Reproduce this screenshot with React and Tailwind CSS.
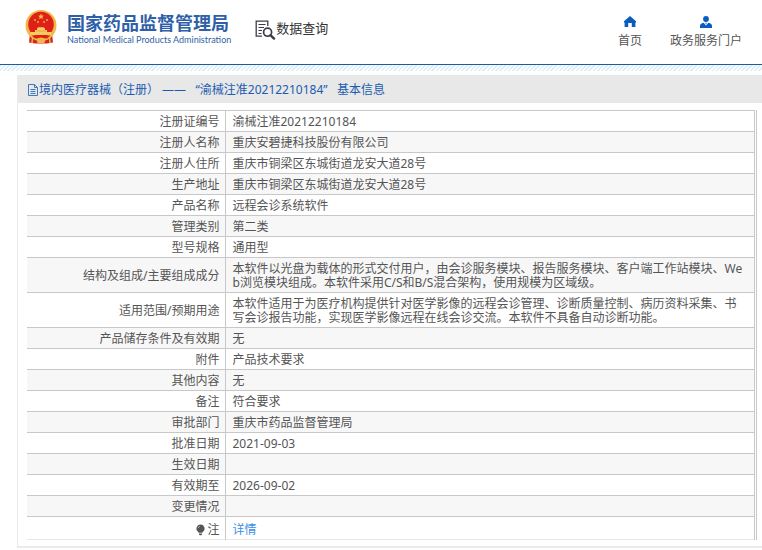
const rows = [
    { label: "注册证编号", value: "渝械注准20212210184" },
    { label: "注册人名称", value: "重庆安碧捷科技股份有限公司" },
    { label: "注册人住所", value: "重庆市铜梁区东城街道龙安大道28号" },
    { label: "生产地址", value: "重庆市铜梁区东城街道龙安大道28号" },
    { label: "产品名称", value: "远程会诊系统软件" },
    { label: "管理类别", value: "第二类" },
    { label: "型号规格", value: "通用型" },
    {
        label: "结构及组成/主要组成成分",
        value: "本软件以光盘为载体的形式交付用户，由会诊服务模块、报告服务模块、客户端工作站模块、Web浏览模块组成。本软件采用C/S和B/S混合架构，使用规模为区域级。",
    },
    {
        label: "适用范围/预期用途",
        value: "本软件适用于为医疗机构提供针对医学影像的远程会诊管理、诊断质量控制、病历资料采集、书写会诊报告功能，实现医学影像远程在线会诊交流。本软件不具备自动诊断功能。",
    },
    { label: "产品储存条件及有效期", value: "无" },
    { label: "附件", value: "产品技术要求" },
    { label: "其他内容", value: "无" },
    { label: "备注", value: "符合要求" },
    { label: "审批部门", value: "重庆市药品监督管理局" },
    { label: "批准日期", value: "2021-09-03" },
    { label: "生效日期", value: "" },
    { label: "有效期至", value: "2026-09-02" },
    { label: "变更情况", value: "" },
];

function Emblem() {
    return (
        <svg viewBox="0 0 32 36" className="h-9 w-8 shrink-0" aria-hidden="true">
            <path d="M5 24 L4 33.5 L10 34.5 H22 L28 33.5 L27 24 Z" fill="#d8281c" />
            <path d="M7.5 29 L7 34 M24.5 29 L25 34" stroke="#f0b848" strokeWidth="1.4" />
            <circle cx="16" cy="16.5" r="15.5" fill="#f2b74a" />
            <circle cx="16" cy="15.5" r="12.8" fill="#dd2118" />
            <path d="M16 4.6 l.8 2 2.2.1 -1.7 1.4 .6 2.1 -1.9-1.2 -1.9 1.2 .6-2.1 -1.7-1.4 2.2-.1 Z" fill="#f9bd4a" />
            <g fill="#f5a840">
                <circle cx="10" cy="11" r="1" />
                <circle cx="22" cy="11" r="1" />
                <circle cx="13" cy="13" r="1" />
                <circle cx="19" cy="13" r="1" />
            </g>
            <path d="M12 19.6 L13.2 18.2 H18.8 L20 19.6 V21 H22 V23 H26.5 V26 H5.5 V23 H10 V21 H12 Z" fill="#f8cb62" />
            <path d="M11 22 H21" stroke="#e8802c" strokeWidth=".6" />
            <path d="M6.5 26.6 H25.5 L22 29.4 H10 Z" fill="#dd2118" />
            <path d="M11.5 30 Q16 26.8 20.5 30 L19.5 34 H12.5 Z" fill="#f2b74a" />
            <path d="M9 31 L12 34 M23 31 L20 34" stroke="#d8281c" strokeWidth="1" />
        </svg>
    );
}

function SearchDocIcon() {
    return (
        <svg viewBox="0 0 21 20" className="h-5 w-[21px] shrink-0" fill="none" stroke="#3c3c48" aria-hidden="true">
            <path d="M7 16.2 H1.2 V1.2 H12.8 V6" strokeWidth="1.3" />
            <path d="M3.5 4.5 H10.5 M3.5 7.5 H9 M3.5 10.5 H7 M3.5 13.5 H6.5" strokeWidth="1.2" />
            <circle cx="12.6" cy="12.2" r="4" strokeWidth="1.7" />
            <path d="M15.5 15.2 L19 18.6" strokeWidth="2.4" strokeLinecap="round" />
        </svg>
    );
}

function HomeIcon() {
    return (
        <svg viewBox="0 0 12 11" className="h-[11px] w-3" fill="#0a5cc0" aria-hidden="true">
            <path d="M6 0 L12 5.2 V6.4 H11.4 V11 H7.8 V7 H4.2 V11 H.6 V6.4 H0 V5.2 Z" />
        </svg>
    );
}

function UserIcon() {
    return (
        <svg viewBox="0 0 12 12" className="h-3 w-3" fill="#0a5cc0" aria-hidden="true">
            <circle cx="6" cy="3" r="2.9" />
            <path d="M0 12 V10 Q0 7.6 3.6 6.8 L6 9.6 L8.4 6.8 Q12 7.6 12 10 V12 Z" />
            <path d="M5.2 6.8 H6.8 L6 8.4 Z" />
        </svg>
    );
}

function FileIcon() {
    return (
        <svg viewBox="0 0 10 12" className="h-3 w-2.5 shrink-0" fill="none" stroke="#3f78bd" aria-hidden="true">
            <path d="M.5 .5 H6.5 L9.5 3.5 V11.5 H.5 Z M6.5 .5 V3.5 H9.5" />
            <path d="M2.5 5.5 H7.5 M2.5 7.5 H7.5 M2.5 9.5 H7.5" />
        </svg>
    );
}

function BulbIcon() {
    return (
        <svg viewBox="0 0 9 12" className="h-3 w-[9px]" aria-hidden="true">
            <path d="M4.5 .5 A4 4 0 0 1 7.4 7.3 L6.2 8.8 H2.8 L1.6 7.3 A4 4 0 0 1 4.5 .5 Z" fill="#555" />
            <path d="M3 9.6 H6 V10.4 L5.2 11.2 H3.8 L3 10.4 Z" fill="#555" />
            <path d="M2.2 4.2 Q2.4 2.6 3.8 2.2" stroke="#ccc" strokeWidth=".8" fill="none" />
        </svg>
    );
}

function Header() {
    return (
        <header>
            <div className="flex h-16 items-start justify-between pr-5 pl-[25px]">
                <div className="flex items-start">
                    <a href="#" className="flex gap-2.5 pt-[9px]">
                        <Emblem />
                        <span className="flex flex-col pt-1 text-[#2f5fa8]">
                            <span className="text-[18px] leading-5 font-bold whitespace-nowrap">国家药品监督管理局</span>
                            <span className="pt-px font-['Lato','Liberation_Sans',sans-serif] text-[9px] leading-3 whitespace-nowrap">
                                National Medical Products Administration
                            </span>
                        </span>
                    </a>
                    <div className="ml-6 flex pt-5">
                        <SearchDocIcon />
                        <h1 className="text-[13px] leading-4 whitespace-nowrap text-[#333]">数据查询</h1>
                    </div>
                </div>
                <nav className="flex gap-7 pt-4 text-[#555]">
                    <a href="#" className="flex flex-col items-center gap-1.5">
                        <HomeIcon />
                        <span className="leading-4">首页</span>
                    </a>
                    <a href="#" className="flex flex-col items-center gap-[5px]">
                        <UserIcon />
                        <span className="leading-4">政务服务门户</span>
                    </a>
                </nav>
            </div>
            <div className="h-[7px] border-t border-[#1f5c9e] bg-[repeating-linear-gradient(135deg,#d8eefa_0px,#d8eefa_1px,#ffffff_2px,#ffffff_3px)]" />
        </header>
    );
}

export default function App() {
    return (
        <div className="bg-white font-['Noto_Sans','Noto_Sans_CJK_SC',sans-serif] text-[12px] text-[#555]" lang="zh-CN">
            <Header />
            <main className="mt-1 ml-[17px] border-b-2 border-l border-[#ebebeb] pb-1.5">
                <h2 className="flex h-7 items-center gap-px bg-[#e8e8e8] pt-px pl-2.5 whitespace-pre text-[#1b5cb0]">
                    <FileIcon />
                    <span>境内医疗器械（注册） ——   “渝械注准20212210184”   基本信息</span>
                </h2>
                <div className="mt-[7px] mr-[5px] ml-[9px] border-r-3 border-double border-[#c8c8c8]">
                    <table className="w-full border-collapse leading-[14px]">
                        <tbody>
                            {rows.map((row) => (
                                <tr key={row.label} className="h-[21px] border-t border-[#c8c8c8] even:bg-[#f7f7f7]">
                                    <th scope="row" className="w-[198px] border-r border-[#c8c8c8] pt-1 pr-[5px] pb-0.5 text-right font-normal">
                                        {row.label}
                                    </th>
                                    <td className="pt-1 pr-2 pb-0.5 pl-[7px] break-all">{row.value}</td>
                                </tr>
                            ))}
                            <tr className="h-[23px] border-t border-b border-t-[#c8c8c8] border-b-[#e8e8e8]">
                                <th scope="row" className="border-r border-[#c8c8c8] pt-1 pr-[5px] font-normal">
                                    <span className="flex items-center justify-end gap-0.5">
                                        <BulbIcon />
                                        注
                                    </span>
                                </th>
                                <td className="pt-1 pl-[7px]">
                                    <a href="#" className="text-[#3a8ee6]">详情</a>
                                </td>
                            </tr>
                        </tbody>
                    </table>
                </div>
            </main>
        </div>
    );
}
